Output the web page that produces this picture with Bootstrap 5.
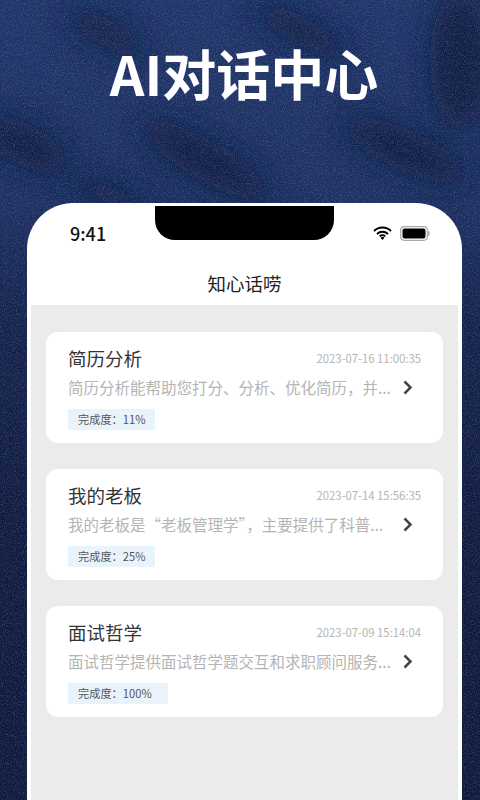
<!DOCTYPE html>
<html lang="zh">
<head>
<meta charset="utf-8">
<title>AI对话中心</title>
<link href="https://cdn.jsdelivr.net/npm/bootstrap@5.3.0/dist/css/bootstrap.min.css" rel="stylesheet">
<style>
html,body{height:800px;overflow:hidden;}
body{background:#14214a;font-family:"Noto Sans CJK SC","Noto Sans",sans-serif;position:relative;}
.cloth{position:absolute;left:0;top:0;width:480px;height:800px;z-index:0;}
.stage{position:relative;z-index:1;width:480px;height:800px;}
.hero-title{height:203px;margin:0;padding-top:35px;padding-left:8px;font-size:54px;line-height:76px;font-weight:700;color:#fff;text-align:center;}
.phone{width:435px;height:597px;margin-left:27px;background:#fff;border-radius:46px 46px 0 0;position:relative;}
.notch{position:absolute;left:128px;top:3px;width:179px;height:34px;background:#000;border-radius:0 0 20px 20px;}
.status-row{height:62px;padding:0 32px 2px 43px;}
.clock{font-size:18px;font-weight:500;color:#111;line-height:24px;}
.nav-name{height:40px;line-height:36px;font-size:18.5px;color:#222;text-align:center;}
.screen{height:495px;margin:0 4px 0 4px;background:#ebebeb;padding:27px 15px 0 15px;}
.chat-card{height:111px;background:#fff;border-radius:12px;margin-bottom:26px;padding:13px 22px 0 23px;border:0;}
.chat-name{font-size:18.5px;line-height:27px;color:#333;margin-left:-1px;}
.chat-date{font-size:11.3px;line-height:27px;color:#b4b4b4;}
.chat-desc{font-size:15.5px;line-height:24px;color:#b4b4b4;white-space:nowrap;margin-left:-1px;}
.chat-row{margin-top:3px;}
.chat-chev{margin-right:8px;}
.progress-tag{display:inline-block;margin-top:10px;margin-left:-1px;height:21px;line-height:21px;padding:0 10px;background:#e9f3fb;color:#555;font-size:11.2px;}
.progress-tag-wide{padding-right:16px;}
</style>
</head>
<body>
<svg class="cloth" viewBox="0 0 480 800" aria-hidden="true">
<defs>
<linearGradient id="base" x1="0" y1="0" x2="0" y2="1">
<stop offset="0" stop-color="#1f3366"/><stop offset=".25" stop-color="#1d2f60"/><stop offset=".4" stop-color="#14214a"/><stop offset=".65" stop-color="#0f1a3c"/><stop offset="1" stop-color="#0e1838"/>
</linearGradient>
<filter id="blur" x="-50%" y="-50%" width="200%" height="200%"><feGaussianBlur stdDeviation="15"/></filter>
<filter id="grain" x="0" y="0" width="100%" height="100%">
<feTurbulence type="fractalNoise" baseFrequency="0.9" numOctaves="2" seed="4"/>
<feColorMatrix values="0 0 0 0 .25  0 0 0 0 .36  0 0 0 0 .68  .5 .5 0 0 -.44"/>
</filter>
</defs>
<rect width="480" height="800" fill="url(#base)"/>
<g filter="url(#blur)" fill="#101b3f">
<ellipse cx="105" cy="32" rx="45" ry="14" transform="rotate(30 105 32)"/>
<ellipse cx="300" cy="30" rx="55" ry="14" transform="rotate(28 300 30)"/>
<ellipse cx="460" cy="60" rx="30" ry="70"/>
<ellipse cx="25" cy="145" rx="50" ry="20" transform="rotate(28 25 145)"/>
<ellipse cx="205" cy="160" rx="75" ry="20" transform="rotate(30 205 160)"/>
<ellipse cx="405" cy="150" rx="70" ry="20" transform="rotate(25 405 150)"/>
<ellipse cx="110" cy="195" rx="45" ry="11" transform="rotate(15 110 195)"/>
</g>
<rect width="480" height="800" filter="url(#grain)"/>
</svg>
<div class="stage">
<h1 class="hero-title">AI对话中心</h1>
<div class="phone">
<div class="notch"></div>
<div class="status-row d-flex justify-content-between align-items-center">
<span class="clock">9:41</span>
<span class="d-flex align-items-center gap-2">
<svg width="19" height="14" viewBox="0 0 19 14" aria-hidden="true"><path d="M1 5a12 12 0 0 1 17 0M4 8a8 8 0 0 1 11 0M6.7 10.4a4 4 0 0 1 5.6 0" fill="none" stroke="#000" stroke-width="2"/><path d="M9.5 14l-2-2.3a3 3 0 0 1 4 0z"/></svg>
<svg width="30" height="15" viewBox="0 0 30 15" aria-hidden="true"><rect x=".7" y=".7" width="26.6" height="13.6" rx="3.5" fill="#fff" stroke="#aaa" stroke-width="1.2"/><rect x="2.5" y="2.5" width="23" height="10" rx="2" fill="#000"/><rect x="28" y="5" width="1.6" height="5" rx=".8" fill="#aaa"/></svg>
</span>
</div>
<div class="nav-name">知心话唠</div>
<div class="screen">
<div class="chat-card">
<div class="d-flex justify-content-between"><span class="chat-name">简历分析</span><span class="chat-date">2023-07-16 11:00:35</span></div>
<div class="chat-row d-flex justify-content-between align-items-center"><div class="chat-desc">简历分析能帮助您打分、分析、优化简历，并...</div><svg class="chat-chev" width="10" height="15" viewBox="0 0 10 15" aria-hidden="true"><path d="M1.5 1.5l6 6-6 6" fill="none" stroke="#444" stroke-width="2.5"/></svg></div>
<span class="progress-tag">完成度：11%</span>
</div>
<div class="chat-card">
<div class="d-flex justify-content-between"><span class="chat-name">我的老板</span><span class="chat-date">2023-07-14 15:56:35</span></div>
<div class="chat-row d-flex justify-content-between align-items-center"><div class="chat-desc">我的老板是“老板管理学”，主要提供了科普...</div><svg class="chat-chev" width="10" height="15" viewBox="0 0 10 15" aria-hidden="true"><path d="M1.5 1.5l6 6-6 6" fill="none" stroke="#444" stroke-width="2.5"/></svg></div>
<span class="progress-tag">完成度：25%</span>
</div>
<div class="chat-card">
<div class="d-flex justify-content-between"><span class="chat-name">面试哲学</span><span class="chat-date">2023-07-09 15:14:04</span></div>
<div class="chat-row d-flex justify-content-between align-items-center"><div class="chat-desc">面试哲学提供面试哲学题交互和求职顾问服务...</div><svg class="chat-chev" width="10" height="15" viewBox="0 0 10 15" aria-hidden="true"><path d="M1.5 1.5l6 6-6 6" fill="none" stroke="#444" stroke-width="2.5"/></svg></div>
<span class="progress-tag progress-tag-wide">完成度：100%</span>
</div>
</div>
</div>
</div>
<script src="https://cdn.jsdelivr.net/npm/bootstrap@5.3.0/dist/js/bootstrap.bundle.min.js"></script>
</body>
</html>
